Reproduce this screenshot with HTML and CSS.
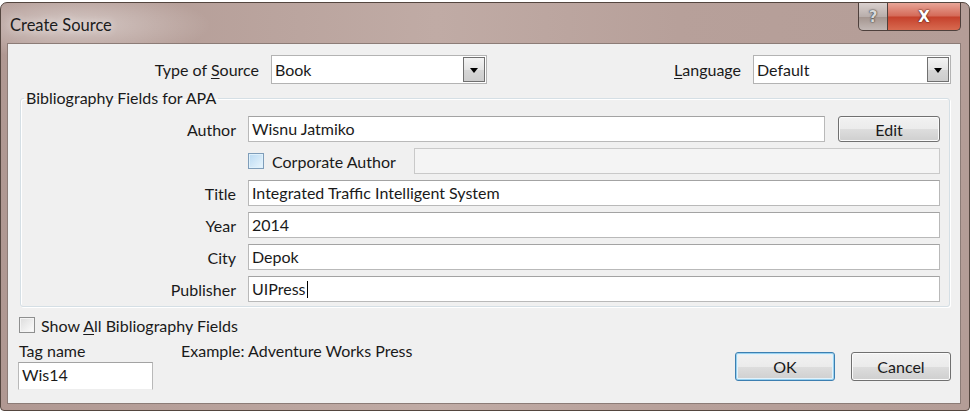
FILE: index.html
```html
<!DOCTYPE html>
<html lang="en">
<head>
  <meta charset="UTF-8" />
  <title>Create Source</title>
  <link rel="stylesheet" href="styles.css">
</head>
<body>

<div class="window">
  <div class="titlebar">
    <span class="title">Create Source</span>
    <div class="caption-buttons">
      <span class="cap-btn help">?</span>
      <span class="cap-btn close">X</span>
    </div>
  </div>

  <div class="client">
    <!-- Jenis sumber dan bahasa -->
    <div class="source-row">
      <span class="lbl lbl-type">Type of <u>S</u>ource</span>
      <div class="combo combo-type"><span class="combo-text">Book</span><span class="combo-arrow"></span></div>
      <span class="lbl lbl-lang"><u>L</u>anguage</span>
      <div class="combo combo-lang"><span class="combo-text">Default</span><span class="combo-arrow"></span></div>
    </div>

    <fieldset class="group">
      <legend>Bibliography Fields for APA</legend>
      <div class="field-grid">
        <span class="lbl">Author</span>
        <div class="author-row">
          <div class="textbox grow">Wisnu Jatmiko</div>
          <span class="btn btn-edit">Edit</span>
        </div>

        <span></span>
        <div class="corp-row">
          <span class="check check-hover"></span>
          <span class="corp-label">Corporate Author</span>
          <div class="textbox disabled grow"></div>
        </div>

        <span class="lbl">Title</span>
        <div class="textbox">Integrated Traffic Intelligent System</div>

        <span class="lbl">Year</span>
        <div class="textbox">2014</div>

        <span class="lbl">City</span>
        <div class="textbox">Depok</div>

        <span class="lbl">Publisher</span>
        <div class="textbox">UIPress<span class="caret"></span></div>
      </div>
    </fieldset>

    <div class="show-all">
      <span class="check"></span>
      <span>Show <u>A</u>ll Bibliography Fields</span>
    </div>

    <div class="bottom-row">
      <div class="tag-col">
        <span class="tag-label">Tag name</span>
        <div class="textbox tag-box">Wis14</div>
      </div>
      <span class="example">Example: Adventure Works Press</span>
      <div class="buttons">
        <span class="btn btn-ok">OK</span>
        <span class="btn btn-cancel">Cancel</span>
      </div>
    </div>
  </div>
</div>

</body>
</html>
```

FILE: styles.css
```css
* { box-sizing: border-box; }
body {
  margin: 0;
  background-color: #fff;
  font-family: Lato, 'Noto Sans', sans-serif;
  font-size: 16px;
  color: #1a1a1a;
}
u { text-decoration-thickness: 1px; text-underline-offset: 2px; }

/* Bingkai jendela */
.window {
  width: 970px;
  height: 409px;
  margin-top: 2px;
  display: flex;
  flex-direction: column;
  padding: 0 8px 6px 6px;
  border: 1px solid #54463f;
  border-radius: 7px 7px 4px 4px;
  background:
    radial-gradient(ellipse 140px 34px at 70px 22px, rgba(255,255,255,0.45), rgba(255,255,255,0)),
    linear-gradient(to right, #b09892, #c0aba5 45%, #b7a09a 70%, #b49d97);
}
.titlebar {
  height: 40px;
  display: flex;
  align-items: flex-start;
  justify-content: space-between;
}
.title {
  margin: 12px 0 0 3px;
  font-size: 16.5px;
  color: #1c1c1c;
  text-shadow: 0 0 8px rgba(255,255,255,0.8);
}
.caption-buttons { display: flex; }
.cap-btn {
  height: 28px;
  display: flex;
  align-items: center;
  justify-content: center;
  font-family: 'DejaVu Sans', sans-serif;
  font-weight: bold;
  font-size: 15px;
  color: #fff;
  border: 1px solid #4e403c;
  border-top: none;
}
.help {
  width: 30px;
  border-radius: 0 0 0 5px;
  background: linear-gradient(to bottom, #d9d0ce, #b9aeab 50%, #a4958f 52%, #c2b8b5);
  color: #d8d8d8;
  text-shadow: 0 0 2px #3a3a3a, 0 0 1px #333;
}
.close {
  width: 73px;
  border-left: none;
  border-radius: 0 0 5px 0;
  background: linear-gradient(to bottom, #e8a597, #d46a58 48%, #c5412c 52%, #d86a50);
  text-shadow: 0 0 2px #4a1a12, 0 0 1px #3a120c;
}

/* Area isi */
.client {
  flex: 1;
  background-color: #f0f0f0;
  border: 1px solid #8c7c77;
  padding-top: 11px;
}
.lbl { text-align: right; white-space: nowrap; }
.source-row {
  display: flex;
  align-items: center;
  height: 29px;
}
.lbl-type { width: 251px; margin-right: 12px; }
.lbl-lang { width: 254px; margin-right: 12px; }
.combo {
  height: 29px;
  display: flex;
  align-items: stretch;
  background-color: #fff;
  border: 1px solid #b3b3b3;
  padding: 1px;
}
.combo-type { width: 216px; }
.combo-lang { width: 198px; }
.combo-text { flex: 1; padding-left: 2px; line-height: 25px; }
.combo-arrow {
  width: 22px;
  border: 1px solid #707070;
  background: linear-gradient(to bottom, #f4f4f4, #e4e4e4 50%, #d6d6d6 52%, #cdcdcd);
  position: relative;
}
.combo-arrow::after {
  content: '';
  position: absolute;
  left: 6px;
  top: 10px;
  border-left: 4.5px solid transparent;
  border-right: 4.5px solid transparent;
  border-top: 5px solid #000;
}

/* Kotak grup */
.group {
  margin: 5px 10px 0 12px;
  padding: 9px 9px 4px 0;
  border: 1px solid #d5dfe5;
  border-radius: 3px;
  box-shadow: inset 1px 1px 0 #fff, 1px 1px 0 #fff;
}
.group legend {
  padding: 0 2px;
  margin-left: 3px;
  line-height: 18px;
}
.field-grid {
  display: grid;
  grid-template-columns: 215px 1fr;
  grid-auto-rows: 26px;
  column-gap: 12px;
  row-gap: 6px;
  align-items: center;
}
.textbox {
  height: 26px;
  line-height: 24px;
  padding-left: 3px;
  background-color: #fff;
  border: 1px solid #b9b9b9;
  border-top-color: #a3a3a3;
  white-space: nowrap;
}
.textbox.disabled {
  background-color: #f4f4f4;
  border-color: #c9c9c9;
}
.grow { flex: 1; }
.caret {
  display: inline-block;
  width: 1px;
  height: 17px;
  margin-left: 1px;
  vertical-align: -3px;
  background-color: #000;
}
.author-row { display: flex; gap: 13px; }
.corp-row { display: flex; align-items: center; }
.corp-label { width: 142px; }
.check {
  width: 16px;
  height: 16px;
  margin-right: 8px;
  border: 1px solid #8e8f8f;
  background: linear-gradient(to bottom right, #dcdcdc, #fdfdfd);
  box-shadow: inset 0 0 0 1px #f4f4f4;
}
.check-hover {
  border-color: #7f9db9;
  background: linear-gradient(to bottom right, #b9d9f2, #eaf6fd);
  box-shadow: inset 0 0 0 1px #dff1fc;
}

/* Tombol */
.btn {
  display: flex;
  align-items: center;
  justify-content: center;
  border: 1px solid #707070;
  border-radius: 3px;
  background: linear-gradient(to bottom, #f2f2f2, #ebebeb 50%, #dddddd 52%, #cfcfcf);
  box-shadow: inset 0 0 0 1px #fbfbfb;
}
.btn-edit { width: 102px; height: 26px; }

.show-all {
  display: flex;
  align-items: center;
  height: 16px;
  margin: 10px 0 0 11px;
}
.show-all .check { margin-right: 6px; }

.bottom-row {
  display: flex;
  align-items: flex-start;
  margin-top: 9px;
}
.tag-col {
  width: 135px;
  margin-left: 10px;
  display: flex;
  flex-direction: column;
}
.tag-label { line-height: 18px; margin-left: 1px; }
.tag-box { margin-top: 2px; height: 28px; border-bottom-color: #eee; }
.example { margin-left: 28px; line-height: 18px; }
.buttons {
  margin-left: auto;
  margin-right: 9px;
  margin-top: 10px;
  display: flex;
  gap: 16px;
}
.btn-ok, .btn-cancel { width: 100px; height: 29px; }
.btn-ok {
  border-color: #3c7fb1;
  box-shadow: inset 0 0 0 1px #98d1ef, inset 0 0 0 2px #e3f2fb;
}
```
